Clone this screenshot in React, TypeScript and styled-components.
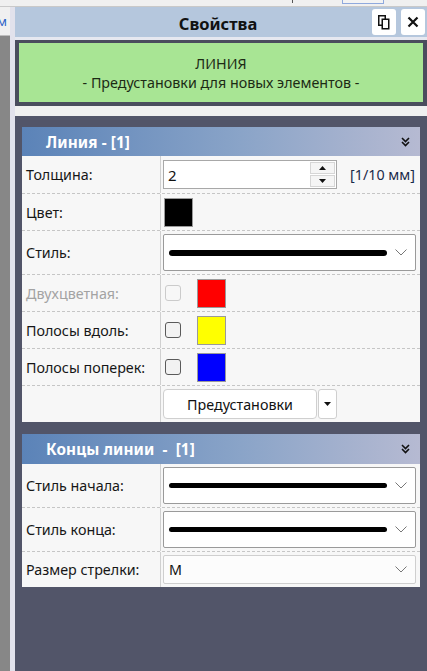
import React from "react";
import styled, { createGlobalStyle } from "styled-components";

const Global = createGlobalStyle`
  html, body { margin: 0; padding: 0; }
  body { width: 427px; height: 671px; overflow: hidden; background: #525569;
    font-family: "Noto Sans", "Open Sans", sans-serif; }
`;

const Page = styled.div`
  width: 427px; height: 671px; display: flex; flex-direction: column; overflow: hidden;
`;

const TopStrip = styled.div`
  height: 6px; flex: none; background: #f0f0f0; border-bottom: 1px solid #c9c9c9;
  display: flex; align-items: flex-start;
`;
const Tick = styled.div`
  width: 1px; height: 3px; background: #555; margin-left: 292px;
`;
const TabOutline = styled.div`
  width: 40px; height: 3px; margin-left: 49px; border: 1px solid #8fa9dd; border-top: none; background: #f3f3f3;
`;

const Main = styled.div`
  flex: 1; display: flex; min-height: 0;
`;

const LeftStrip = styled.div`
  width: 15px; flex: none; display: grid; grid-template-columns: 10px 5px; grid-template-rows: 29px 1fr;
`;
const LeftTop = styled.div`
  background: #f0f0f0; border-bottom: 1px solid #bdbdbd; color: #2a62c8; font-size: 13px;
  line-height: 1; padding-top: 8px; margin-left: -3px; overflow: hidden;
  font-family: "Noto Sans", sans-serif;
`;
const LeftGray = styled.div` background: #878787; `;
const LeftLight = styled.div` grid-row: 1 / span 2; grid-column: 2; background: #e2e2ec; `;

const Panel = styled.div`
  flex: 1; display: flex; flex-direction: column; min-width: 0;
`;

const TitleBar = styled.div`
  height: 30px; flex: none; background: #b5c7dd; display: flex; align-items: center; position: relative;
  justify-content: center;
`;
const Title = styled.div`
  font-weight: 700; font-size: 16.5px; color: #111; margin-left: -6px; margin-top: 2px;
`;
const TitleButtons = styled.div`
  position: absolute; right: 2px; top: 2px; display: flex; gap: 5px;
`;
const TitleBtn = styled.div`
  width: 24px; height: 26px; background: #fff; border-radius: 3px; display: flex; align-items: center;
  justify-content: center;
`;

const Sep = styled.div<{ $h: number; $c: string }>`
  height: ${(p) => p.$h}px; flex: none; background: ${(p) => p.$c};
`;

const InfoWrap = styled.div`
  background: #4a4d5d; padding: 3px 4px 4px 4px; flex: none;
`;
const InfoBox = styled.div`
  background: #a8e594; height: 59px; display: flex; flex-direction: column; align-items: center;
  justify-content: center; color: #1c2a14; font-size: 14.3px; line-height: 19px;
`;

const Content = styled.div`
  flex: 1; background: #525569; padding: 11px 7px 0 7px; display: flex; flex-direction: column; gap: 12px;
`;

const Section = styled.div`
  background: #f7f7f7; display: flex; flex-direction: column;
`;
const SectionHead = styled.div<{ $h: number }>`
  height: ${(p) => p.$h}px; background: linear-gradient(to right, #5b83b8, #8aa4c8 55%, #b6bad2);
  display: flex; align-items: center; padding: 0 10px 0 24px; color: #fff; font-weight: 700; font-size: 15.3px;
  justify-content: space-between;
`;
const HeadText = styled.span`
  white-space: pre; letter-spacing: 0.1px;
`;

const Row = styled.div<{ $h: number; $last?: boolean }>`
  height: ${(p) => p.$h}px; display: grid; grid-template-columns: 139px 1fr;
  border-bottom: ${(p) => (p.$last ? "none" : "1px dashed #c6c6c6")}; box-sizing: border-box;
`;
const Label = styled.div<{ $disabled?: boolean }>`
  border-right: 1px solid #d0d0d0; display: flex; align-items: center; padding-left: 4px;
  font-size: 14.3px; color: ${(p) => (p.$disabled ? "#a3a3a3" : "#161616")};
`;
const Cell = styled.div`
  display: flex; align-items: center; padding-left: 2px; padding-right: 4px; gap: 0;
`;

const SpinBox = styled.div`
  width: 174px; height: 29px; box-sizing: border-box; border: 1px solid #a8a8a8; background: #fff;
  display: flex; align-items: stretch;
`;
const SpinValue = styled.div`
  flex: 1; display: flex; align-items: center; padding-left: 4px; font-size: 15px; color: #111;
`;
const SpinBtns = styled.div`
  width: 25px; display: flex; flex-direction: column; gap: 1px; padding: 1px 1px 1px 0;
`;
const SpinBtn = styled.div`
  flex: 1; background: #f5f5f5; border: 1px solid #d6d6d6; display: flex; align-items: center; justify-content: center;
`;
const Unit = styled.div`
  margin-left: 13px; font-size: 14.3px; color: #1a2a4a;
`;

const Swatch = styled.div<{ $c: string; $ml?: number }>`
  width: 29px; height: 29px; box-sizing: border-box; background: ${(p) => p.$c};
  border: 1px solid #9a9a9a; margin-left: ${(p) => p.$ml ?? 1}px;
`;

const Check = styled.div<{ $disabled?: boolean }>`
  width: 16px; height: 16px; box-sizing: border-box; border-radius: 3px; margin-left: 2px;
  border: 1px solid ${(p) => (p.$disabled ? "#cbcbcb" : "#5a5a5a")};
  background: ${(p) => (p.$disabled ? "#f7f7f7" : "#f2f2f2")};
`;

const Select = styled.div<{ $h: number; $light?: boolean }>`
  flex: 1; height: ${(p) => p.$h}px; box-sizing: border-box; border-radius: 2px;
  border: 1px solid ${(p) => (p.$light ? "#cfcfcf" : "#9a9a9a")};
  background: ${(p) => (p.$light ? "#fcfcfc" : "#fff")}; display: flex; align-items: center;
  padding: 0 8px 0 5px; gap: 8px;
`;
const LineSample = styled.div<{ $t: number }>`
  flex: 1; height: ${(p) => p.$t}px; background: #000; border-radius: 3px; margin-right: 0;
`;
const SelText = styled.div`
  flex: 1; font-size: 14.3px; color: #111;
`;

const BtnGroup = styled.div`
  display: flex; gap: 1px; align-items: center;
`;
const PresetBtn = styled.div`
  width: 154px; height: 30px; box-sizing: border-box; border: 1px solid #cfcfcf; border-radius: 4px;
  background: #fff; display: flex; align-items: center; justify-content: center; font-size: 14.3px; color: #111;
`;
const DropBtn = styled.div`
  width: 19px; height: 30px; box-sizing: border-box; border: 1px solid #cfcfcf; border-radius: 3px;
  background: #fff; display: flex; align-items: center; justify-content: center;
`;

const Chevron = () => (
  <svg width="12" height="7" viewBox="0 0 12 7" style={{ flex: "none" }}>
    <path d="M0.5 0.5 L6 6 L11.5 0.5" fill="none" stroke="#777" strokeWidth="1" />
  </svg>
);

const DoubleChevron = () => (
  <svg width="9" height="10" viewBox="0 0 9 10">
    <path d="M1 1 L4.5 4.5 L8 1 M1 5 L4.5 8.5 L8 5" fill="none" stroke="#111" strokeWidth="1.6" />
  </svg>
);

const Tri = ({ up }: { up?: boolean }) => (
  <svg width="7" height="4" viewBox="0 0 7 4">
    <path d={up ? "M0 4 L3.5 0 L7 4 Z" : "M0 0 L3.5 4 L7 0 Z"} fill="#111" />
  </svg>
);

const CopyIcon = () => (
  <svg width="12" height="15" viewBox="0 0 12 15">
    <rect x="0.75" y="0.75" width="6.5" height="9.5" fill="#fff" stroke="#111" strokeWidth="1.5" />
    <rect x="4.25" y="4.25" width="6.5" height="9.5" fill="#fff" stroke="#111" strokeWidth="1.5" />
  </svg>
);

const CloseIcon = () => (
  <svg width="12" height="12" viewBox="0 0 12 12">
    <path d="M1.5 1.5 L10.5 10.5 M10.5 1.5 L1.5 10.5" stroke="#111" strokeWidth="2.2" />
  </svg>
);

export default function App() {
  return (
    <Page>
      <Global />
      <TopStrip>
        <Tick />
        <TabOutline />
      </TopStrip>
      <Main>
        <LeftStrip>
          <LeftTop>м</LeftTop>
          <LeftGray />
          <LeftLight />
        </LeftStrip>
        <Panel>
          <TitleBar>
            <Title>Свойства</Title>
            <TitleButtons>
              <TitleBtn><CopyIcon /></TitleBtn>
              <TitleBtn><CloseIcon /></TitleBtn>
            </TitleButtons>
          </TitleBar>
          <Sep $h={3} $c="#e6e8f0" />
          <InfoWrap>
            <InfoBox>
              <div>ЛИНИЯ</div>
              <div>- Предустановки для новых элементов -</div>
            </InfoBox>
          </InfoWrap>
          <Sep $h={10} $c="#f0f0f0" />
          <Content>
            <Section>
              <SectionHead $h={29}>
                <HeadText>Линия - [1]</HeadText>
                <DoubleChevron />
              </SectionHead>
              <Row $h={38}>
                <Label>Толщина:</Label>
                <Cell>
                  <SpinBox>
                    <SpinValue>2</SpinValue>
                    <SpinBtns>
                      <SpinBtn><Tri up /></SpinBtn>
                      <SpinBtn><Tri /></SpinBtn>
                    </SpinBtns>
                  </SpinBox>
                  <Unit>[1/10 мм]</Unit>
                </Cell>
              </Row>
              <Row $h={37}>
                <Label>Цвет:</Label>
                <Cell><Swatch $c="#000" $ml={1} /></Cell>
              </Row>
              <Row $h={44}>
                <Label>Стиль:</Label>
                <Cell>
                  <Select $h={37}>
                    <LineSample $t={6} />
                    <Chevron />
                  </Select>
                </Cell>
              </Row>
              <Row $h={37}>
                <Label $disabled>Двухцветная:</Label>
                <Cell>
                  <Check $disabled />
                  <Swatch $c="#ff0000" $ml={16} />
                </Cell>
              </Row>
              <Row $h={37}>
                <Label>Полосы вдоль:</Label>
                <Cell>
                  <Check />
                  <Swatch $c="#ffff00" $ml={16} />
                </Cell>
              </Row>
              <Row $h={37}>
                <Label>Полосы поперек:</Label>
                <Cell>
                  <Check />
                  <Swatch $c="#0000ff" $ml={16} />
                </Cell>
              </Row>
              <Row $h={36} $last>
                <Label />
                <Cell>
                  <BtnGroup>
                    <PresetBtn>Предустановки</PresetBtn>
                    <DropBtn><Tri /></DropBtn>
                  </BtnGroup>
                </Cell>
              </Row>
            </Section>
            <Section>
              <SectionHead $h={30}>
                <HeadText>Концы линии  -  [1]</HeadText>
                <DoubleChevron />
              </SectionHead>
              <Row $h={44}>
                <Label>Стиль начала:</Label>
                <Cell>
                  <Select $h={37}>
                    <LineSample $t={5} />
                    <Chevron />
                  </Select>
                </Cell>
              </Row>
              <Row $h={44}>
                <Label>Стиль конца:</Label>
                <Cell>
                  <Select $h={37}>
                    <LineSample $t={5} />
                    <Chevron />
                  </Select>
                </Cell>
              </Row>
              <Row $h={35} $last>
                <Label>Размер стрелки:</Label>
                <Cell>
                  <Select $h={29} $light>
                    <SelText>M</SelText>
                    <Chevron />
                  </Select>
                </Cell>
              </Row>
            </Section>
          </Content>
        </Panel>
      </Main>
    </Page>
  );
}
